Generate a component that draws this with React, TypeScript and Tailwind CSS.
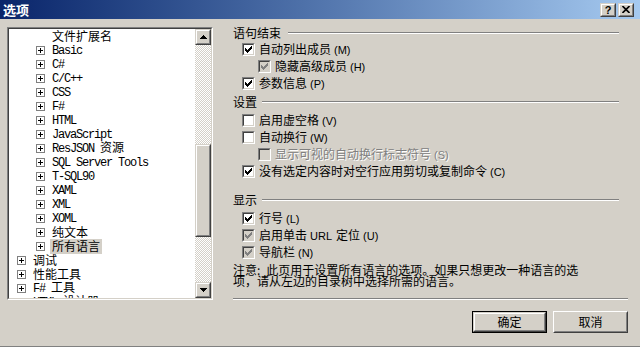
import React from "react";

function Mixed({ text }: { text: string }) {
  const parts = text.match(/[\x20-\x7e]+|[^\x20-\x7e]+/g) || [];
  return (
    <>
      {parts.map((p, i) =>
        /^[\x20-\x7e]+$/.test(p) ? (
          <span key={i} className="font-['Liberation_Mono',monospace] tracking-[-1.2px] whitespace-pre">
            {p}
          </span>
        ) : (
          <span key={i}>{p}</span>
        )
      )}
    </>
  );
}

function Plus() {
  return (
    <svg width="9" height="9" viewBox="0 0 9 9" className="block shrink-0" shapeRendering="crispEdges">
      <rect x="0.5" y="0.5" width="8" height="8" fill="#fff" stroke="#808080" />
      <rect x="2" y="4" width="5" height="1" fill="#000" />
      <rect x="4" y="2" width="1" height="5" fill="#000" />
    </svg>
  );
}

function CheckMark({ color }: { color: string }) {
  const cols = [2, 3, 4, 3, 2, 1, 0];
  return (
    <svg width="7" height="7" viewBox="0 0 7 7" className="block" shapeRendering="crispEdges">
      {cols.map((y, x) => (
        <rect key={x} x={x} y={y} width="1" height="3" fill={color} />
      ))}
    </svg>
  );
}

function Box({ checked, gray }: { checked?: boolean; gray?: boolean }) {
  return (
    <div className="w-[13px] h-[13px] shrink-0 border border-t-[#808080] border-l-[#808080] border-b-white border-r-white">
      <div
        className={
          gray
            ? "w-full h-full flex items-center justify-center border border-t-[#404040] border-l-[#404040] border-b-[#d4d0c8] border-r-[#d4d0c8] bg-[#d4d0c8]"
            : "w-full h-full flex items-center justify-center border border-t-[#404040] border-l-[#404040] border-b-[#d4d0c8] border-r-[#d4d0c8] bg-white"
        }
      >
        {checked && <CheckMark color={gray ? "#808080" : "#000000"} />}
      </div>
    </div>
  );
}

function Raised({ className, children }: { className?: string; children?: React.ReactNode }) {
  return (
    <div className={"border border-t-[#d4d0c8] border-l-[#d4d0c8] border-b-[#404040] border-r-[#404040] bg-[#d4d0c8] " + (className || "")}>
      <div className="w-full h-full border border-t-white border-l-white border-b-[#808080] border-r-[#808080] flex items-center justify-center">
        {children}
      </div>
    </div>
  );
}

function Arrow({ down }: { down?: boolean }) {
  return (
    <svg width="7" height="4" viewBox="0 0 7 4" className="block" shapeRendering="crispEdges">
      {down ? <polygon points="0,0 7,0 3.5,4" fill="#000" /> : <polygon points="3.5,0 7,4 0,4" fill="#000" />}
    </svg>
  );
}

type Row = { t: string; lvl: 1 | 2; plus?: boolean; sel?: boolean };
const rows: Row[] = [
  { t: "文件扩展名", lvl: 2 },
  { t: "Basic", lvl: 2, plus: true },
  { t: "C#", lvl: 2, plus: true },
  { t: "C/C++", lvl: 2, plus: true },
  { t: "CSS", lvl: 2, plus: true },
  { t: "F#", lvl: 2, plus: true },
  { t: "HTML", lvl: 2, plus: true },
  { t: "JavaScript", lvl: 2, plus: true },
  { t: "ResJSON 资源", lvl: 2, plus: true },
  { t: "SQL Server Tools", lvl: 2, plus: true },
  { t: "T-SQL90", lvl: 2, plus: true },
  { t: "XAML", lvl: 2, plus: true },
  { t: "XML", lvl: 2, plus: true },
  { t: "XOML", lvl: 2, plus: true },
  { t: "纯文本", lvl: 2, plus: true },
  { t: "所有语言", lvl: 2, plus: true, sel: true },
  { t: "调试", lvl: 1, plus: true },
  { t: "性能工具", lvl: 1, plus: true },
  { t: "F# 工具", lvl: 1, plus: true },
  { t: "HTML 设计器", lvl: 1, plus: true },
];

function Mn({ children }: { children: React.ReactNode }) {
  return <span className="font-['Liberation_Sans',sans-serif] text-[11px] ml-[3px]">{children}</span>;
}

function Header({ title }: { title: string }) {
  return (
    <div className="h-[20px] flex items-center">
      <span>{title}</span>
      <div className="flex-1 ml-[5px] mr-[9px] h-[2px] border-t border-t-[#808080] border-b border-b-white" />
    </div>
  );
}

function CRow({
  level,
  checked,
  gray,
  disabled,
  children,
}: {
  level: 1 | 2;
  checked?: boolean;
  gray?: boolean;
  disabled?: boolean;
  children: React.ReactNode;
}) {
  return (
    <div className={level === 1 ? "h-[17px] flex items-center pl-[9px]" : "h-[17px] flex items-center pl-[25px]"}>
      <Box checked={checked} gray={gray} />
      <span
        className={
          disabled
            ? "ml-[4px] whitespace-nowrap text-[#808080] [text-shadow:1px_1px_0_#ffffff]"
            : "ml-[4px] whitespace-nowrap"
        }
      >
        {children}
      </span>
    </div>
  );
}

export default function App() {
  return (
    <div className="w-[640px] h-[347px] bg-[#d4d0c8] flex flex-col overflow-hidden border-b border-b-[#808080] font-['Noto_Sans_CJK_SC',sans-serif] text-[12px] leading-[14px] text-black">
      {/* title bar */}
      <div className="h-[19px] shrink-0 flex items-center bg-linear-to-r from-[#0a246a] to-[#a6caf0] pl-[3px] pr-[6px]">
        <span className="text-white font-bold text-[13px]">选项</span>
        <div className="ml-auto flex gap-[2px]">
          <Raised className="w-[16px] h-[14px]">
            <span className="font-['Liberation_Sans',sans-serif] font-bold text-[11px] leading-[10px]">?</span>
          </Raised>
          <Raised className="w-[16px] h-[14px]">
            <svg width="8" height="7" viewBox="0 0 8 7" className="block">
              <path d="M0.5 0 L7.5 7 M7.5 0 L0.5 7" stroke="#000" strokeWidth="1.6" />
            </svg>
          </Raised>
        </div>
      </div>
      <div className="h-[1px] shrink-0" />

      {/* main */}
      <div className="flex shrink-0">
        {/* tree */}
        <div className="ml-[7px] mt-[7px] w-[206px] h-[273px] border border-t-[#808080] border-l-[#808080] border-b-white border-r-white">
          <div className="w-full h-full flex border border-t-[#404040] border-l-[#404040] border-b-[#d4d0c8] border-r-[#d4d0c8]">
            <div className="flex-1 bg-white overflow-hidden">
              {rows.map((r, i) => (
                <div
                  key={i}
                  className={
                    r.lvl === 1
                      ? "h-[14px] flex items-center pl-[8px] whitespace-nowrap"
                      : "h-[14px] flex items-center pl-[27px] whitespace-nowrap"
                  }
                >
                  {r.plus ? <Plus /> : <div className="w-[9px] shrink-0" />}
                  {r.sel ? (
                    <span className="ml-[5px] px-[2px] h-[15px] flex items-center bg-[#d4d0c8]">
                      <Mixed text={r.t} />
                    </span>
                  ) : (
                    <span className="ml-[7px]">
                      <Mixed text={r.t} />
                    </span>
                  )}
                </div>
              ))}
            </div>
            {/* scrollbar */}
            <div className="w-[16px] flex flex-col bg-[image:repeating-conic-gradient(#d4d0c8_0%_25%,#ffffff_0%_50%)] bg-[length:2px_2px]">
              <Raised className="w-[16px] h-[16px] shrink-0">
                <Arrow />
              </Raised>
              <div className="flex-1 flex flex-col">
                <div className="h-[99px]" />
                <Raised className="w-[16px] h-[93px]" />
              </div>
              <Raised className="w-[16px] h-[16px] shrink-0">
                <Arrow down />
              </Raised>
            </div>
          </div>
        </div>

        {/* right panel */}
        <div className="ml-[20px] mt-[5px] w-[395px] flex flex-col">
          <div className="h-[16px] flex items-center">
            <span>语句结束</span>
            <div className="flex-1 ml-[7px] mr-[9px] h-[2px] border-t border-t-[#808080] border-b border-b-white" />
          </div>
          <CRow level={1} checked>
            自动列出成员<Mn>(M)</Mn>
          </CRow>
          <CRow level={2} checked gray>
            隐藏高级成员<Mn>(H)</Mn>
          </CRow>
          <CRow level={1} checked>
            参数信息<Mn>(P)</Mn>
          </CRow>
          <Header title="设置" />
          <CRow level={1}>
            启用虚空格<Mn>(V)</Mn>
          </CRow>
          <CRow level={1}>
            自动换行<Mn>(W)</Mn>
          </CRow>
          <CRow level={2} gray disabled>
            显示可视的自动换行标志符号<Mn>(S)</Mn>
          </CRow>
          <CRow level={1} checked>
            没有选定内容时对空行应用剪切或复制命令<Mn>(C)</Mn>
          </CRow>
          <div className="h-[10px]" />
          <Header title="显示" />
          <CRow level={1} checked>
            行号<Mn>(L)</Mn>
          </CRow>
          <CRow level={1} checked gray>
            启用单击<Mn>URL</Mn>
            <span className="ml-[4px]">定位</span>
            <Mn>(U)</Mn>
          </CRow>
          <CRow level={1} checked gray>
            导航栏<Mn>(N)</Mn>
          </CRow>
          <div className="mt-[3px] leading-[11px] whitespace-nowrap">
            注意:<span className="ml-[6px]">此页用于设置所有语言的选项。如果只想更改一种语言的选</span>
            <br />
            项，请从左边的目录树中选择所需的语言。
          </div>
          <div className="mt-[12px] h-[2px] border-t border-t-[#808080] border-b border-b-white" />
        </div>
      </div>

      {/* buttons */}
      <div className="mt-[11px] flex justify-end gap-[6px] pr-[12px]">
        <div className="w-[75px] h-[22px] border border-black">
          <Raised className="w-full h-full">
            <span>确定</span>
          </Raised>
        </div>
        <div className="w-[75px] h-[22px] border border-t-white border-l-white border-b-[#404040] border-r-[#404040] bg-[#d4d0c8]">
          <div className="w-full h-full border border-t-[#d4d0c8] border-l-[#d4d0c8] border-b-[#808080] border-r-[#808080] flex items-center justify-center">
            <span>取消</span>
          </div>
        </div>
      </div>
    </div>
  );
}
